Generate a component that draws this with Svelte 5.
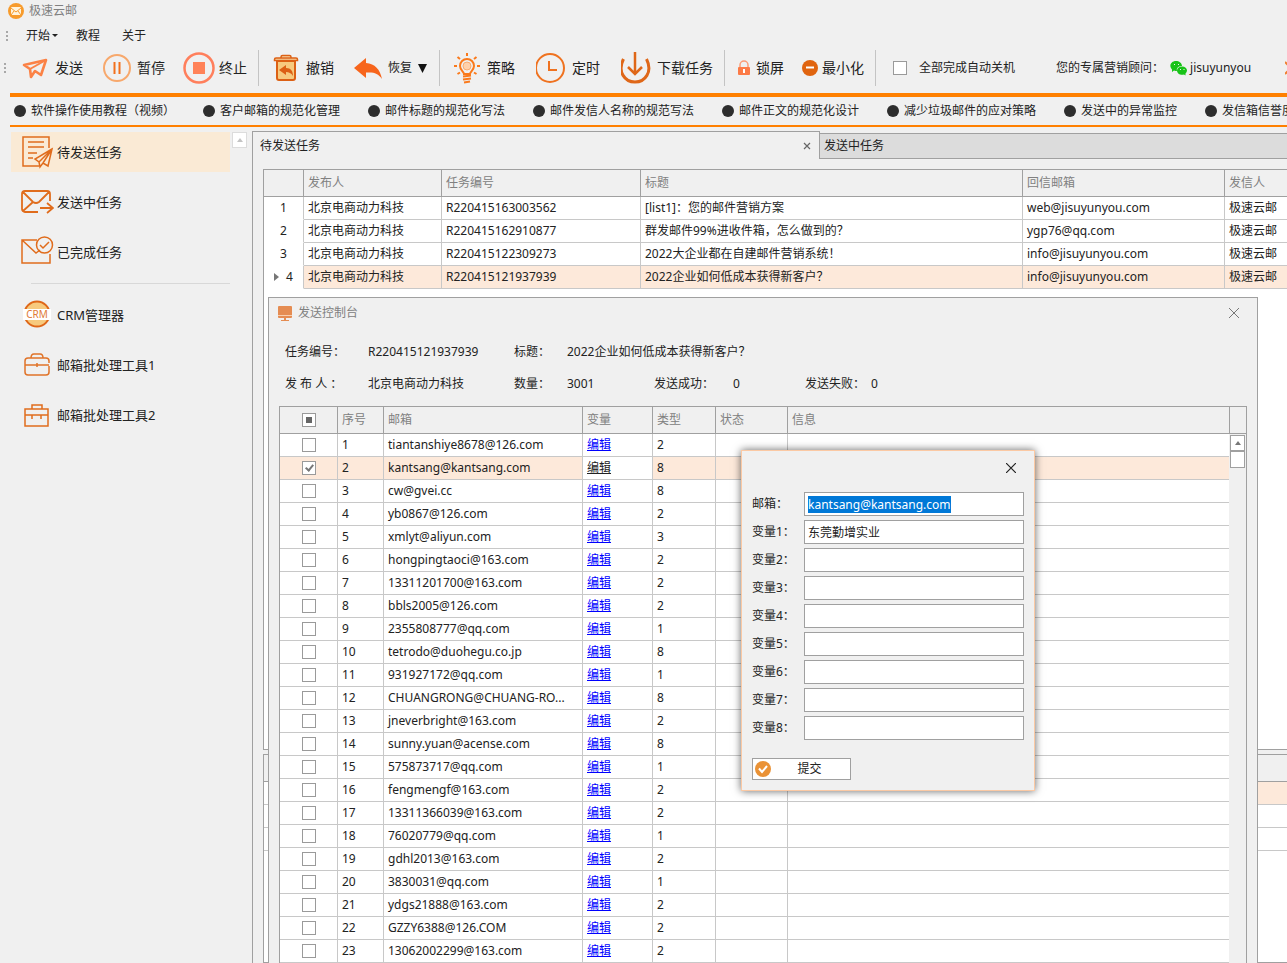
<script>
    import { onMount } from 'svelte';

    const guides = [
        "软件操作使用教程（视频）",
        "客户邮箱的规范化管理",
        "邮件标题的规范化写法",
        "邮件发信人名称的规范写法",
        "邮件正文的规范化设计",
        "减少垃圾邮件的应对策略",
        "发送中的异常监控",
        "发信箱信誉度"
    ];

    const tasks = [
        { id: "R220415163003562", title: "[list1]：您的邮件营销方案", reply: "web@jisuyunyou.com" },
        { id: "R220415162910877", title: "群发邮件99%进收件箱，怎么做到的？", reply: "ygp76@qq.com" },
        { id: "R220415122309273", title: "2022大企业都在自建邮件营销系统！", reply: "info@jisuyunyou.com" },
        { id: "R220415121937939", title: "2022企业如何低成本获得新客户？", reply: "info@jisuyunyou.com" }
    ];

    let currentTask = $state(3);

    let contacts = $state([
        ["tiantanshiye8678@126.com", 2],
        ["kantsang@kantsang.com", 8],
        ["cw@gvei.cc", 8],
        ["yb0867@126.com", 2],
        ["xmlyt@aliyun.com", 3],
        ["hongpingtaoci@163.com", 2],
        ["13311201700@163.com", 2],
        ["bbls2005@126.com", 2],
        ["2355808777@qq.com", 1],
        ["tetrodo@duohegu.co.jp", 8],
        ["931927172@qq.com", 1],
        ["CHUANGRONG@CHUANG-RO...", 8],
        ["jneverbright@163.com", 2],
        ["sunny.yuan@acense.com", 8],
        ["575873717@qq.com", 1],
        ["fengmengf@163.com", 2],
        ["13311366039@163.com", 2],
        ["76020779@qq.com", 1],
        ["gdhl2013@163.com", 2],
        ["3830031@qq.com", 1],
        ["ydgs21888@163.com", 2],
        ["GZZY6388@126.COM", 2],
        ["13062002299@163.com", 2]
    ].map(([email, type], i) => ({ email, type, checked: i === 1 })));

    let currentContact = $state(1);
    let showEditor = $state(true);
    let fields = $state([
        { label: "邮箱：", value: "kantsang@kantsang.com" },
        { label: "变量1：", value: "东莞勤增实业" },
        ...[2, 3, 4, 5, 6, 7, 8].map(n => ({ label: "变量" + n + "：", value: "" }))
    ]);

    let someChecked = $derived(contacts.some(c => c.checked) && !contacts.every(c => c.checked));

    function editContact(event, i) {
        event.preventDefault();
        currentContact = i;
        fields[0].value = contacts[i].email;
        showEditor = true;
    }

    function submit(event) {
        event.preventDefault();
        contacts[currentContact].email = fields[0].value;
        showEditor = false;
    }

    onMount(() => {
        document.getElementById("field0").select();
    });
</script>

<div class="app">
    <header class="titlebar">
        <svg width="16" height="16" viewBox="0 0 16 16">
            <circle cx="8" cy="8" r="8" fill="#f79b2c" />
            <rect x="3" y="4" width="10" height="8" rx="1" fill="#fff3dc" />
            <path d="M3 5l5 4 5-4M3 12l3-4M13 12l-3-4" fill="none" stroke="#f79b2c" />
        </svg>
        <span>极速云邮</span>
    </header>

    <nav class="menu">
        <i class="grip"></i>
        <button>开始<svg width="6" height="4" viewBox="0 0 6 4"><path d="M0 0h6L3 3z" fill="#222" /></svg></button>
        <button>教程</button>
        <button>关于</button>
    </nav>

    <div class="toolbar">
        <i class="grip"></i>
        <div class="group">
            <button>
                <svg width="32" height="32" viewBox="0 0 32 32" fill="none" stroke="#fb8246" stroke-width="2.6" stroke-linejoin="round">
                    <path d="M5 13L27 8l-5 15-6-4-4 6-1-8z" />
                    <path d="M27 8L11 17" stroke-width="2" />
                </svg>
                发送
            </button>
            <button>
                <svg width="32" height="32" viewBox="0 0 32 32" fill="none">
                    <circle cx="16" cy="16" r="13" stroke="#f7a86c" stroke-width="2" />
                    <path d="M13.5 10v12M18.5 10v12" stroke="#f2701c" stroke-width="2" />
                </svg>
                暂停
            </button>
            <button>
                <svg width="32" height="32" viewBox="0 0 32 32">
                    <circle cx="16" cy="16" r="14.5" fill="none" stroke="#ff7f5c" stroke-width="2.5" />
                    <rect x="10" y="10" width="12" height="12" fill="#ff8258" />
                </svg>
                终止
            </button>
        </div>
        <i class="sep"></i>
        <div class="group">
            <button>
                <svg width="32" height="32" viewBox="0 0 32 32" fill="none" stroke="#dc6014" stroke-width="2">
                    <path d="M7 9h18v17a2 2 0 0 1-2 2H9a2 2 0 0 1-2-2z" fill="#f7ca7e" />
                    <path d="M11 5.5V5a1.5 1.5 0 0 1 1.5-1.5h7A1.5 1.5 0 0 1 21 5v.5M4.5 8.5v-1A1.5 1.5 0 0 1 6 6h20a1.5 1.5 0 0 1 1.500 1.500v1z" fill="#f9d7a3" stroke-width="1.5" />
                    <path d="M9 18l7-5v3c5 0 7 3 7 8-2-3-4-4-7-4v3z" fill="#dc6014" stroke="none" />
                </svg>
                撤销
            </button>
            <button class="small">
                <svg width="32" height="32" viewBox="0 0 32 32">
                    <path d="M2 16L14 6v5c9 1 14 6 16 16-4-6-8-7-16-6.5V26z" fill="#f7651c" />
                </svg>
                恢复<svg class="drop" width="9" height="9" viewBox="0 0 9 9"><path d="M0 0h9L4.5 9z" fill="#111" /></svg>
            </button>
        </div>
        <i class="sep"></i>
        <div class="group spaced">
            <button>
                <svg width="32" height="32" viewBox="0 0 32 32" fill="none" stroke="#fa7a1c" stroke-width="2">
                    <path d="M13 22c0-2-4-4-4-8a7 7 0 0 1 14 0c0 4-4 6-4 8z" />
                    <path d="M16 1v3M3 14h3M26 14h3M6.5 5L9 7M25.500 5L23 7M6.5 22L9 20.5M25.500 22L23 20.5" />
                    <circle cx="16" cy="14" r="4" fill="#ffd1ab" stroke="#f9ac72" stroke-width="1" />
                    <path d="M12 24.5l8-1M12 27.5l8-1M13 30.5l6-1" />
                </svg>
                策略
            </button>
            <button>
                <svg width="32" height="32" viewBox="0 0 32 32" fill="none" stroke="#ef7220" stroke-width="2">
                    <circle cx="14" cy="16" r="14" />
                    <path d="M13 9v9h8" />
                </svg>
                定时
            </button>
            <button>
                <svg width="32" height="32" viewBox="0 0 32 32" fill="none" stroke="#df6718" stroke-width="3">
                    <path d="M2.500 7C-4 20 4 30 14 30S32 20 25.500 7" />
                    <path d="M14 0v21M7 15l7 7 7-7" stroke-width="2.5" />
                </svg>
                下载任务
            </button>
        </div>
        <i class="sep"></i>
        <div class="group">
            <button>
                <svg width="16" height="16" viewBox="0 0 16 16">
                    <path d="M4 8V5a4 4 0 0 1 8 0v3" fill="none" stroke="#fb9c76" stroke-width="1.5" />
                    <rect x="2" y="7" width="12" height="8" rx="1" fill="#fc7b47" />
                    <path d="M8 9v4" stroke="#fff" stroke-width="2" />
                </svg>
                锁屏
            </button>
            <button>
                <svg width="16" height="16" viewBox="0 0 16 16">
                    <circle cx="8" cy="8" r="8" fill="#e0640f" />
                    <path d="M4 7.5h8" stroke="#fff" stroke-width="2" />
                </svg>
                最小化
            </button>
        </div>
        <i class="sep"></i>
        <label class="shutdown"><input type="checkbox">全部完成自动关机</label>
        <span class="advisor">您的专属营销顾问：</span>
        <svg class="wechat" width="17" height="16" viewBox="0 0 17 16" fill="#18c318">
            <path d="M6 1c3 0 6 2 6 5-3 0-6 2-5 5-1 0-2 0-3-.5L2 12V9.500C-1.500 6 1 1 6 1z" />
            <path d="M12 6.500c3 0 5 2 5 4 0 1-.5 2-1.500 3v2l-1.500-1c-3 1-7-.5-7-4 0-2 2-4 5-4z" />
            <path d="M4 4.500h1M8 4.500h1M10 9.500h1M13.500 9.500h1" stroke="#f0f0f0" />
        </svg>
        <span>jisuyunyou</span>
        <svg class="more" width="16" height="16" viewBox="0 0 16 16" fill="none" stroke="#f08030" stroke-width="2">
            <path d="M0 2l12 12M12 2L0 14" />
        </svg>
    </div>

    <nav class="guides">
        {#each guides as guide}
            <a href="#guide"><i></i>{guide}</a>
        {/each}
    </nav>

    <div class="main">
        <aside>
            <nav class="side">
                <button class="active">
                    <svg width="34" height="34" viewBox="0 0 34 34" fill="none" stroke="#e06c1c" stroke-width="1.5">
                        <path d="M29 13V2H3v29h16M8 7h16M8 12h16M8 18h9M8 23h5" />
                        <path d="M32 14L15 24l4 3 1 5 3-4 5 3zM32 14L19 27M32 14l-9 14" />
                    </svg>
                    待发送任务
                </button>
                <button>
                    <svg width="34" height="34" viewBox="0 0 34 34" fill="none" stroke="#e06c1c" stroke-width="1.8">
                        <path d="M18 27H5a3 3 0 0 1-3-3V9a3 3 0 0 1 3-3h22a3 3 0 0 1 3 3v7M3 7l10 10q3 2 6 0L29 7M3 26l10-9M20 23h12M27 18l6 5-6 5" />
                    </svg>
                    发送中任务
                </button>
                <button>
                    <svg width="34" height="34" viewBox="0 0 34 34" fill="none" stroke="#e06c1c" stroke-width="1.5">
                        <path d="M17 5H2v23h28V19M2 5l14 13 4-3" />
                        <circle cx="24.5" cy="10" r="8" />
                        <path d="M20 10l3 3 6-6" />
                    </svg>
                    已完成任务
                </button>
                <hr>
                <button>
                    <svg width="34" height="34" viewBox="0 0 34 34">
                        <circle cx="17" cy="16" r="12.5" fill="#f7ca7e" stroke="#df6718" stroke-width="2" />
                        <rect x="3" y="11" width="28" height="11" fill="#fff" />
                        <text x="17" y="20" font-size="10" text-anchor="middle" fill="#e07a35">CRM</text>
                    </svg>
                    CRM管理器
                </button>
                <button>
                    <svg width="34" height="34" viewBox="0 0 34 34" fill="none" stroke="#e07328" stroke-width="1.5">
                        <path d="M29 15v-2a3 3 0 0 0-3-3H8a3 3 0 0 0-3 3v11a3 3 0 0 0 3 3h18a3 3 0 0 0 3-3v-6M5 17h24M17 15v4M11 10q0-4 3-4h6q3 0 3 4" />
                    </svg>
                    邮箱批处理工具1
                </button>
                <button>
                    <svg width="34" height="34" viewBox="0 0 34 34" fill="none" stroke="#e06c1c" stroke-width="1.5">
                        <path d="M5 11h23v17H5zM5 17h23M12 11V7h10v4M12 17v4M21 17v4" />
                    </svg>
                    邮箱批处理工具2
                </button>
            </nav>
            <button class="up faint" aria-label="向上"><i></i></button>
        </aside>

        <section class="panel">
            <div class="tabs">
                <div class="tab active">
                    <button>待发送任务</button>
                    <button aria-label="关闭">
                        <svg width="8" height="8" viewBox="0 0 8 8" stroke="#666" stroke-width="1.2"><path d="M1 1l6 6M7 1L1 7" /></svg>
                    </button>
                </div>
                <div class="tab"><button>发送中任务</button></div>
            </div>
            <div class="panes">
                <div class="pane">
                    <table class="tasks">
                        <colgroup>
                            <col class="w40"><col class="w138"><col class="w199"><col class="w382"><col class="w202"><col>
                        </colgroup>
                        <thead>
                            <tr><th></th><th>发布人</th><th>任务编号</th><th>标题</th><th>回信邮箱</th><th>发信人</th></tr>
                        </thead>
                        <tbody>
                            {#each tasks as task, i}
                                <tr class:current={i === currentTask} onclick={() => currentTask = i}>
                                    <td class="num">{#if i === currentTask}<i></i>{/if}{i + 1}</td>
                                    <td>北京电商动力科技</td>
                                    <td>{task.id}</td>
                                    <td>{task.title}</td>
                                    <td>{task.reply}</td>
                                    <td>极速云邮</td>
                                </tr>
                            {/each}
                        </tbody>
                    </table>
                </div>
                <div class="pane">
                    <table>
                        <colgroup><col class="w40"><col></colgroup>
                        <thead><tr><th></th><th></th></tr></thead>
                        <tbody>
                            <tr class="current"><td class="blank"></td><td></td></tr>
                            <tr><td></td><td></td></tr>
                            <tr><td></td><td></td></tr>
                        </tbody>
                    </table>
                </div>
            </div>
        </section>
    </div>

    <section class="console">
        <div class="console-title">
            <svg width="16" height="16" viewBox="0 0 16 16" fill="#e58c52">
                <rect x="1" y="1" width="14" height="12" rx="1" />
                <path d="M1 10.5h14" stroke="#f8cfb0" />
                <path d="M7 13h2v2h3v1H4v-1h3z" />
            </svg>
            <span>发送控制台</span>
            <button aria-label="关闭">
                <svg width="10" height="10" viewBox="0 0 10 10" stroke="#777"><path d="M0 0l10 10M10 0L0 10" /></svg>
            </button>
        </div>
        <div class="info">
            <span>任务编号：</span><span>{tasks[currentTask].id}</span>
            <span>标题：</span><span class="span5">{tasks[currentTask].title}</span>
            <span>发 布 人 ：</span><span>北京电商动力科技</span>
            <span>数量：</span><span>3001</span>
            <span>发送成功：</span><span>0</span>
            <span>发送失败：</span><span>0</span>
        </div>
        <div class="list">
            <table>
                <colgroup>
                    <col class="w58"><col class="w46"><col class="w199"><col class="w70"><col class="w63"><col class="w72"><col>
                </colgroup>
                <thead>
                    <tr>
                        <th class="check"><input type="checkbox" indeterminate={someChecked} aria-label="全选"></th>
                        <th>序号</th><th>邮箱</th><th>变量</th><th>类型</th><th>状态</th><th>信息</th>
                    </tr>
                </thead>
                <tbody>
                    {#each contacts as contact, i}
                        <tr class:current={i === currentContact}>
                            <td class="check"><input type="checkbox" bind:checked={contact.checked} aria-label={contact.email}></td>
                            <td>{i + 1}</td>
                            <td>{contact.email}</td>
                            <td class="edit"><a href="#edit" onclick={e => editContact(e, i)}>编辑</a></td>
                            <td>{contact.type}</td>
                            <td></td>
                            <td></td>
                        </tr>
                    {/each}
                </tbody>
            </table>
            <div class="scroll">
                <div class="corner"></div>
                <button class="up" aria-label="向上滚动"><i></i></button>
                <div class="thumb"></div>
            </div>
        </div>
    </section>

    {#if showEditor}
        <form class="editor" onsubmit={submit}>
            <button type="button" class="close" aria-label="关闭" onclick={() => showEditor = false}>
                <svg width="10" height="10" viewBox="0 0 10 10" stroke="#222" stroke-width="1.2"><path d="M0 0l10 10M10 0L0 10" /></svg>
            </button>
            {#each fields as field, i}
                <div class="field">
                    <label for="field{i}">{field.label}</label>
                    <input id="field{i}" type="text" bind:value={field.value}>
                </div>
            {/each}
            <button class="submit">
                <svg width="16" height="16" viewBox="0 0 16 16">
                    <circle cx="8" cy="8" r="8" fill="#ea9236" />
                    <path d="M4 7.5l3 3.5 5-6" fill="none" stroke="#fff" stroke-width="2" />
                </svg>
                <span>提交</span>
            </button>
        </form>
    {/if}
</div>

<style>
    :global(body) {
        background: #f0f0f0;
        overflow: hidden;
    }

    .app {
        position: relative;
        display: flex;
        flex-direction: column;
        height: 100vh;
        overflow: hidden;
        font: 12px/16px "Noto Sans", "Noto Sans CJK SC", sans-serif;
        color: #222;
        white-space: nowrap;
    }

    svg {
        flex: none;
    }

    button {
        display: flex;
        align-items: center;
        border: 0;
        padding: 0;
        background: none;
        font: inherit;
        color: inherit;
        white-space: nowrap;
    }

    a {
        color: inherit;
        text-decoration: none;
    }

    input[type="checkbox"] {
        appearance: none;
        display: block;
        box-sizing: border-box;
        flex: none;
        width: 14px;
        height: 14px;
        margin: 0;
        border: 1px solid #9a9a9a;
        background: #fff;
    }

    input[type="checkbox"]:checked::after {
        content: "";
        display: block;
        width: 3px;
        height: 6px;
        margin: 1px 0 0 4px;
        border: solid #777;
        border-width: 0 2px 2px 0;
        transform: rotate(40deg);
    }

    input[type="checkbox"]:indeterminate::after {
        content: "";
        display: block;
        width: 6px;
        height: 6px;
        margin: 3px;
        background: #666;
    }

    .titlebar {
        display: flex;
        align-items: center;
        gap: 5px;
        height: 22px;
        padding-left: 8px;
        color: #808080;
    }

    .menu {
        display: flex;
        align-items: center;
        box-sizing: border-box;
        height: 26px;
        padding: 2px 0 0 6px;
    }

    .menu button {
        gap: 2px;
        margin-left: 18px;
    }

    .menu button:last-child {
        margin-left: 22px;
    }

    .grip {
        flex: none;
        width: 2px;
        height: 10px;
        background: repeating-linear-gradient(#a8a8a8 0 2px, transparent 2px 4px);
    }

    .toolbar {
        display: flex;
        align-items: center;
        height: 40px;
        padding: 0 0 5px 4px;
        overflow: hidden;
    }

    .group {
        display: flex;
    }

    .spaced {
        gap: 3px;
    }

    .grip + .group {
        margin-left: 4px;
    }

    .group button {
        gap: 4px;
        padding: 0 9px;
        font-size: 14px;
    }

    .group .small {
        font-size: 12px;
    }

    .drop {
        margin: 0 1px 0 2px;
    }

    .sep {
        flex: none;
        width: 1px;
        height: 36px;
        margin: 0 2px;
        background: #c4c4c4;
    }

    .shutdown {
        display: flex;
        align-items: center;
        gap: 12px;
        margin-left: 15px;
    }

    .advisor {
        margin-left: 41px;
    }

    .wechat {
        margin: 0 3px 0 6px;
    }

    .more {
        margin-left: 34px;
    }

    .guides {
        display: flex;
        align-items: center;
        gap: 28px;
        box-sizing: border-box;
        height: 34px;
        margin-left: 10px;
        padding-left: 4px;
        border-top: 4px solid #ff8000;
        border-bottom: 2px solid #ff8000;
        overflow: hidden;
    }

    .guides a {
        display: flex;
        align-items: center;
        gap: 5px;
    }

    .guides i {
        width: 12px;
        height: 12px;
        border-radius: 50%;
        background: #2d2d2d;
    }

    .main {
        display: flex;
        flex: 1;
        min-height: 0;
    }

    aside {
        display: flex;
        align-items: flex-start;
        gap: 2px;
        box-sizing: border-box;
        flex: 0 0 252px;
        padding: 5px 0 0 11px;
    }

    .side {
        display: flex;
        flex-direction: column;
        gap: 10px;
        width: 219px;
    }

    .side button {
        gap: 3px;
        height: 40px;
        padding-left: 9px;
        font-size: 13px;
    }

    .side .active {
        background: #faead5;
    }

    .side hr {
        width: 199px;
        height: 1px;
        margin: 1px 0 1px auto;
        border: 0;
        background: #d8d8d8;
    }

    .up {
        justify-content: center;
        box-sizing: border-box;
        width: 15px;
        height: 16px;
        border: 1px solid #a0a0a0;
        background: #fff;
    }

    .up i {
        border: 3px solid transparent;
        border-top: 0;
        border-bottom: 4px solid #777;
    }

    .faint {
        border-color: #dcdcdc;
    }

    .faint i {
        border-bottom-color: #c4c4c4;
    }

    .panel {
        display: flex;
        flex-direction: column;
        flex: 1;
        min-width: 0;
        margin-top: 4px;
        border-left: 1px solid #a0a0a0;
    }

    .tabs {
        display: flex;
        height: 28px;
    }

    .tab {
        display: flex;
        align-items: center;
        box-sizing: border-box;
        flex: 1;
        margin-top: 2px;
        padding-left: 4px;
        border: solid #a0a0a0;
        border-width: 1px 0;
        background: #dcdcdc;
    }

    .tab.active {
        flex: 0 0 567px;
        justify-content: space-between;
        margin-top: 0;
        padding: 0 8px 0 7px;
        border-width: 1px 1px 0 0;
        background: none;
    }

    .panes {
        display: grid;
        grid-template-rows: 581fr 209fr;
        gap: 4px;
        flex: 1;
        min-height: 0;
        padding: 10px 0 0 10px;
    }

    .pane {
        min-height: 0;
        border: 1px solid #a0a0a0;
        border-right: 0;
        background: #fff;
        overflow: hidden;
    }

    table {
        width: 100%;
        table-layout: fixed;
        border-spacing: 0;
    }

    .w40 { width: 40px; }
    .w46 { width: 46px; }
    .w58 { width: 58px; }
    .w63 { width: 63px; }
    .w70 { width: 70px; }
    .w72 { width: 72px; }
    .w138 { width: 138px; }
    .w199 { width: 199px; }
    .w202 { width: 202px; }
    .w382 { width: 382px; }

    th, td {
        box-sizing: border-box;
        height: 23px;
        padding: 0 4px;
        border: solid #c8c8c8;
        border-width: 0 1px 1px 0;
        text-align: left;
        overflow: hidden;
        text-overflow: ellipsis;
    }

    th {
        height: 27px;
        border-color: #a0a0a0;
        background: #f0f0f0;
        font-weight: normal;
        color: #808080;
    }

    th:last-child, td:last-child {
        border-right: 0;
    }

    .current td {
        background: #fde9da;
    }

    .current .num, .current .edit, .current .blank {
        background: #fff;
    }

    .tasks .num {
        border-bottom-color: transparent;
        text-align: center;
    }

    .num i {
        display: inline-block;
        margin-right: 7px;
        border: 4px solid transparent;
        border-left: 5px solid #777;
        border-right: 0;
    }

    .check input {
        margin: 0 auto;
    }

    .edit a {
        color: #0000ff;
        text-decoration: underline;
    }

    .current .edit a {
        color: #222;
    }

    .console {
        position: absolute;
        top: 297px;
        right: 29px;
        bottom: -1px;
        left: 268px;
        display: flex;
        flex-direction: column;
        border: 1px solid #a0a0a0;
        background: #f0f0f0;
    }

    .console-title {
        display: flex;
        align-items: center;
        gap: 5px;
        height: 30px;
        padding: 0 18px 0 8px;
        color: #808080;
    }

    .console-title button {
        margin-left: auto;
    }

    .info {
        display: grid;
        grid-template-columns: 83px 146px 53px 87px 79px 72px 66px 1fr;
        grid-auto-rows: 32px;
        align-items: center;
        padding: 8px 0 6px 16px;
    }

    .span5 {
        grid-column: span 5;
    }

    .list {
        display: flex;
        flex: 1;
        min-height: 0;
        margin: 0 10px;
        border: 1px solid #a0a0a0;
        border-bottom: 0;
        overflow: hidden;
    }

    .list table {
        flex: 1;
        min-width: 0;
        align-self: flex-start;
        background: #fff;
    }

    .scroll {
        flex: 0 0 17px;
    }

    .corner {
        box-sizing: border-box;
        height: 27px;
        margin-bottom: 1px;
        border: solid #a0a0a0;
        border-width: 0 0 1px 1px;
    }

    .thumb {
        box-sizing: border-box;
        width: 15px;
        height: 17px;
        margin-left: 1px;
        border: 1px solid #a0a0a0;
        background: #fff;
    }

    .scroll .up {
        margin-left: 1px;
    }

    .editor {
        position: absolute;
        top: 450px;
        left: 741px;
        display: flex;
        flex-direction: column;
        gap: 4px;
        box-sizing: border-box;
        width: 294px;
        padding: 0 10px;
        padding-bottom: 10px;
        border: 1px solid #fbc9a4;
        background: #f0f0f0;
        box-shadow: 0 0 8px rgba(0, 0, 0, 0.6);
    }

    .close {
        align-self: flex-end;
        height: 33px;
        margin-bottom: 4px;
        padding-right: 8px;
    }

    .field {
        display: flex;
        align-items: center;
    }

    .field label {
        flex: 0 0 52px;
    }

    .field input {
        box-sizing: border-box;
        flex: 1;
        min-width: 0;
        height: 24px;
        padding: 0 3px;
        border: 1px solid #a0a0a0;
        background: #fff;
        outline: 0;
        font: inherit;
        color: inherit;
    }

    .field input::selection {
        background: #0078d7;
        color: #fff;
    }

    .submit {
        box-sizing: border-box;
        width: 99px;
        height: 22px;
        margin-top: 14px;
        padding: 0 2px;
        border: 1px solid #a0a0a0;
        background: #fff;
    }

    .submit span {
        flex: 1;
    }
</style>
